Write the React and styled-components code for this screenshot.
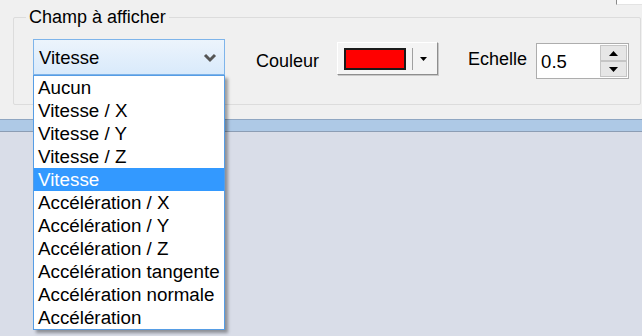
import React from "react";
import styled, { createGlobalStyle } from "styled-components";

const Global = createGlobalStyle`
  html, body { margin: 0; padding: 0; }
  body { font-family: "Liberation Sans", Arial, sans-serif; background: #d9dde8; }
`;

const Page = styled.div`
  width: 642px;
  height: 336px;
  display: flex;
  flex-direction: column;
  position: relative;
  overflow: hidden;
  background: #d9dde8;
`;

const TopPanel = styled.div`
  height: 119px;
  background: #f0f0f0;
  display: flex;
  flex-direction: column;
`;

const TopStrip = styled.div`
  height: 5px;
  display: flex;
  justify-content: flex-end;
`;

const CutControl = styled.div`
  width: 25px;
  height: 4px;
  background: #ffffff;
  border-left: 1px solid #8a8a8a;
  border-bottom: 1px solid #e3e3e3;
`;

const GroupBox = styled.div`
  position: relative;
  margin: 12px 0 0 13px;
  width: 626px;
  height: 86px;
  border: 1px solid #dcdcdc;
  border-radius: 2px;
`;

const Legend = styled.span`
  position: absolute;
  left: 12px;
  top: -12px;
  padding: 0 3px;
  background: #f0f0f0;
  font-size: 18px;
  color: #000;
  line-height: 22px;
`;

const Row = styled.div`
  display: flex;
  align-items: flex-start;
  padding: 21px 0 0 19px;
`;

const Combo = styled.div`
  width: 185px;
  height: 34px;
  border: 1px solid #7eb4ea;
  background: linear-gradient(#ecf4fc, #d9eafb);
  display: flex;
  align-items: center;
  justify-content: space-between;
  padding: 0 0 0 5px;
  box-sizing: content-box;
  position: relative;
  font-size: 18.5px;
`;

const ComboText = styled.span`
  margin-top: 2px;
`;

const Chevron = styled.svg`
  width: 14px;
  height: 10px;
  margin-right: 7px;
  margin-top: 2px;
`;

const Label = styled.span`
  font-size: 18px;
  margin-left: ${(p) => p.$ml}px;
  margin-top: ${(p) => p.$mt}px;
  line-height: 20px;
`;

const ColorButton = styled.div`
  margin-left: 18px;
  margin-top: 3px;
  width: 93px;
  height: 31px;
  background: #f4f4f4;
  border: 1px solid;
  border-color: #ffffff #8e8e8e #8e8e8e #ffffff;
  box-shadow: 1px 1px 0 #c8c8c8;
  display: flex;
  align-items: center;
  padding-left: 6px;
`;

const Swatch = styled.div`
  width: 58px;
  height: 18px;
  background: #ff0000;
  border: 2px solid #1a1a1a;
`;

const Sep = styled.div`
  width: 1px;
  height: 22px;
  background: #a0a0a0;
  margin-left: 6px;
`;

const SmallArrow = styled.svg`
  width: 7px;
  height: 4px;
  margin-left: 7px;
`;

const Spin = styled.div`
  margin-left: 9px;
  margin-top: 4px;
  width: 91px;
  height: 34px;
  border: 1px solid #adadad;
  background: #fff;
  display: flex;
  align-items: stretch;
`;

const SpinText = styled.div`
  flex: 1;
  font-size: 18.5px;
  display: flex;
  align-items: center;
  padding-left: 4px;
  padding-top: 1px;
`;

const SpinButtons = styled.div`
  width: 27px;
  display: flex;
  flex-direction: column;
  padding: 1px 1px 1px 0;
`;

const SpinBtn = styled.div`
  flex: 1;
  background: #e6e6e6;
  border: 1px solid #c5c5c5;
  display: flex;
  align-items: center;
  justify-content: center;
`;

const Band = styled.div`
  height: 11px;
  background: #aec9e6;
  border-top: 1px solid #8fa6c2;
  border-bottom: 1px solid #8c9db4;
`;

const Rest = styled.div`
  flex: 1;
  background: #d9dde8;
`;

const List = styled.ul`
  position: absolute;
  left: 33px;
  top: 75px;
  width: 190px;
  margin: 0;
  padding: 0;
  list-style: none;
  background: #fff;
  border: 1px solid #569de5;
  box-shadow: 3px 3px 3px rgba(0, 0, 0, 0.35);
`;

const Item = styled.li`
  height: 23px;
  line-height: 24px;
  padding-left: 4px;
  font-size: 18.8px;
  white-space: nowrap;
  color: ${(p) => (p.$sel ? "#fff" : "#000")};
  background: ${(p) => (p.$sel ? "#3399ff" : "transparent")};
`;

const items = [
  "Aucun",
  "Vitesse / X",
  "Vitesse / Y",
  "Vitesse / Z",
  "Vitesse",
  "Accélération / X",
  "Accélération / Y",
  "Accélération / Z",
  "Accélération tangente",
  "Accélération normale",
  "Accélération",
];

export default function App() {
  return (
    <>
      <Global />
      <Page>
        <TopPanel>
          <TopStrip>
            <CutControl />
          </TopStrip>
          <GroupBox>
            <Legend>Champ à afficher</Legend>
            <Row>
              <Combo>
                <ComboText>Vitesse</ComboText>
                <Chevron viewBox="0 0 14 10">
                  <polyline points="2,2 7,7 12,2" fill="none" stroke="#555" strokeWidth="3" />
                </Chevron>
              </Combo>
              <Label $ml={31} $mt={12}>Couleur</Label>
              <ColorButton>
                <Swatch />
                <Sep />
                <SmallArrow viewBox="0 0 7 4">
                  <polygon points="0,0 7,0 3.5,4" fill="#000" />
                </SmallArrow>
              </ColorButton>
              <Label $ml={30} $mt={10}>Echelle</Label>
              <Spin>
                <SpinText>0.5</SpinText>
                <SpinButtons>
                  <SpinBtn>
                    <svg width="9" height="5" viewBox="0 0 9 5">
                      <polygon points="0,5 9,5 4.5,0" fill="#000" />
                    </svg>
                  </SpinBtn>
                  <SpinBtn>
                    <svg width="9" height="5" viewBox="0 0 9 5">
                      <polygon points="0,0 9,0 4.5,5" fill="#000" />
                    </svg>
                  </SpinBtn>
                </SpinButtons>
              </Spin>
            </Row>
          </GroupBox>
        </TopPanel>
        <Band />
        <Rest />
        <List>
          {items.map((t, i) => (
            <Item key={i} $sel={i === 4}>
              {t}
            </Item>
          ))}
        </List>
      </Page>
    </>
  );
}
